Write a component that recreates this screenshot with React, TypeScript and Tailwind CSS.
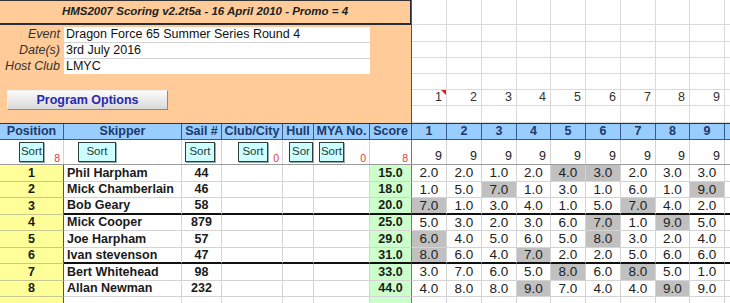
import React from "react";

const raceW = [
  "w-[35px]",
  "w-[35px]",
  "w-[35px]",
  "w-[34px]",
  "w-[35px]",
  "w-[35px]",
  "w-[35px]",
  "w-[34px]",
  "w-[35px]",
];

const rows = [
  { pos: 1, name: "Phil Harpham", sail: "44", score: "15.0", r: ["2.0", "2.0", "1.0", "2.0", "4.0", "3.0", "2.0", "3.0", "3.0"], g: [4, 5] },
  { pos: 2, name: "Mick Chamberlain", sail: "46", score: "18.0", r: ["1.0", "5.0", "7.0", "1.0", "3.0", "1.0", "6.0", "1.0", "9.0"], g: [2, 8] },
  { pos: 3, name: "Bob Geary", sail: "58", score: "20.0", r: ["7.0", "1.0", "3.0", "4.0", "1.0", "5.0", "7.0", "4.0", "2.0"], g: [0, 6] },
  { pos: 4, name: "Mick Cooper", sail: "879", score: "25.0", r: ["5.0", "3.0", "2.0", "3.0", "6.0", "7.0", "1.0", "9.0", "5.0"], g: [5, 7] },
  { pos: 5, name: "Joe Harpham", sail: "57", score: "29.0", r: ["6.0", "4.0", "5.0", "6.0", "5.0", "8.0", "3.0", "2.0", "4.0"], g: [0, 5] },
  { pos: 6, name: "Ivan stevenson", sail: "47", score: "31.0", r: ["8.0", "6.0", "4.0", "7.0", "2.0", "2.0", "5.0", "6.0", "6.0"], g: [0, 3] },
  { pos: 7, name: "Bert Whitehead", sail: "98", score: "33.0", r: ["3.0", "7.0", "6.0", "5.0", "8.0", "6.0", "8.0", "5.0", "1.0"], g: [4, 6] },
  { pos: 8, name: "Allan Newman", sail: "232", score: "44.0", r: ["4.0", "8.0", "8.0", "9.0", "7.0", "4.0", "4.0", "9.0", "9.0"], g: [3, 7] },
];

const topRowH = ["h-[25px]", "h-[17px]", "h-[16px]", "h-[16px]", "h-[16px]", "h-[16px]", "h-[17px]"];

function SortBtn({ w, label = "Sort" }: { w: string; label?: string }) {
  return (
    <div
      className={`${w} h-[20px] border border-[#2c3e3e] bg-[#ccffff] flex items-center justify-center overflow-hidden text-[11.5px] leading-none text-[#2a3a36] shadow-[1px_1px_0_#9aa]`}
    >
      {label}
    </div>
  );
}

function Red({ children }: { children: React.ReactNode }) {
  return (
    <span className="absolute right-[3px] bottom-[1px] text-[10.5px] leading-none text-[#e03a3a]">
      {children}
    </span>
  );
}

export default function App() {
  return (
    <div className="w-[730px] h-[303px] overflow-hidden bg-white font-['Liberation_Sans',Arial,sans-serif] text-[#1a1a1a]">
      {/* Top section */}
      <div className="flex h-[123px]">
        <div className="w-[412px] h-[123px] bg-[#ffcc99] border-r border-r-[#555] flex flex-col">
          <div className="h-[25px] border-t border-t-[#333] border-b-2 border-b-[#2a2d3a] border-r border-r-[#2a2d3a] flex items-center justify-center text-[11.5px] font-bold italic text-[#222]">
            HMS2007 Scoring v2.2t5a - 16 April 2010 - Promo = 4
          </div>
          <div className="mt-[2px] flex flex-col">
            {[
              ["Event", "Dragon Force 65 Summer Series Round 4", "h-[15px]", ""],
              ["Date(s)", "3rd July 2016", "h-[16px]", "border-t border-t-[#d4d4d4]"],
              ["Host Club", "LMYC", "h-[16px]", "border-t border-t-[#d4d4d4]"],
            ].map(([l, v, h, b]) => (
              <div key={l} className={`flex ${h}`}>
                <div className="w-[64px] flex items-center justify-end pr-[4px] italic text-[12.5px] text-[#333] leading-none">
                  {l}
                </div>
                <div className={`w-[306px] bg-white flex items-center pl-[2px] text-[12.5px] leading-none text-[#111] ${b}`}>
                  {v}
                </div>
              </div>
            ))}
          </div>
          <div className="mt-[16px] ml-[7px] w-[161px] h-[20px] bg-gradient-to-b from-[#fbfbfb] to-[#d9d9d9] border border-t-[#f0f0f0] border-l-[#f0f0f0] border-r-[#8a8a8a] border-b-[#8a8a8a] flex items-center justify-center text-[12.5px] font-bold text-[#2727b0] leading-none">
            Program Options
          </div>
        </div>
        <div className="flex-1 flex flex-col">
          {topRowH.map((h, ri) => (
            <div key={ri} className={`flex ${h}`}>
              {raceW.map((w, ci) => (
                <div
                  key={ci}
                  className={`${w} relative border-r border-b border-[#dadada] flex items-center justify-end pr-[4px] text-[12.5px] text-[#333] leading-none`}
                >
                  {ri === 5 ? ci + 1 : null}
                  {ri === 5 && ci === 0 ? (
                    <span className="absolute top-0 right-0 w-0 h-0 border-l-[5px] border-l-transparent border-t-[5px] border-t-[#e02020]" />
                  ) : null}
                </div>
              ))}
              <div className="w-[5px] border-b border-[#dadada]" />
            </div>
          ))}
        </div>
      </div>

      {/* Header row */}
      <div className="flex h-[17px] bg-[#99ccff] border-t border-t-[#333] border-b border-b-[#3a5a8c] text-[12.5px] font-bold text-[#1c3a6a] leading-none">
        {[
          ["Position", "w-[64px]"],
          ["Skipper", "w-[118px]"],
          ["Sail #", "w-[40px]"],
          ["Club/City", "w-[61px]"],
          ["Hull", "w-[31px]"],
          ["MYA No.", "w-[56px]"],
          ["Score", "w-[42px]"],
        ].map(([t, w]) => (
          <div key={t} className={`${w} border-r border-r-[#3a5a8c] flex items-center justify-center whitespace-nowrap overflow-hidden`}>
            {t}
          </div>
        ))}
        {raceW.map((w, i) => (
          <div key={i} className={`${w} border-r border-r-[#3a5a8c] flex items-center justify-center`}>
            {i + 1}
          </div>
        ))}
        <div className="w-[5px]" />
      </div>

      {/* Sort row */}
      <div className="flex h-[25px] border-b border-b-[#9a9a9a]">
        <div className="w-[64px] relative border-r border-r-[#d4d4d4] flex justify-center pt-[2px]">
          <SortBtn w="w-[25px]" />
          <Red>8</Red>
        </div>
        <div className="w-[118px] border-r border-r-[#d4d4d4] flex pt-[2px] pl-[14px]">
          <SortBtn w="w-[38px]" />
        </div>
        <div className="w-[40px] border-r border-r-[#d4d4d4] flex pt-[2px] pl-[3px]">
          <SortBtn w="w-[30px]" />
        </div>
        <div className="w-[61px] relative border-r border-r-[#d4d4d4] flex pt-[2px] pl-[16px]">
          <SortBtn w="w-[30px]" />
          <Red>0</Red>
        </div>
        <div className="w-[31px] border-r border-r-[#d4d4d4] flex pt-[2px] pl-[6px]">
          <SortBtn w="w-[24px]" label="Sor" />
        </div>
        <div className="w-[56px] relative border-r border-r-[#d4d4d4] flex pt-[2px] pl-[5px]">
          <SortBtn w="w-[25px]" />
          <Red>0</Red>
        </div>
        <div className="w-[42px] relative border-r border-r-[#777]">
          <Red>8</Red>
        </div>
        {raceW.map((w, i) => (
          <div key={i} className={`${w} border-r border-r-[#d4d4d4] flex items-end justify-end pr-[4px] pb-[2px] text-[12.5px] leading-none text-[#222]`}>
            9
          </div>
        ))}
        <div className="w-[5px]" />
      </div>

      {/* Data rows */}
      {rows.map((row, idx) => {
        const thick = idx === 2 || idx === 5;
        const b = thick ? "border-b-2 border-b-[#111]" : "border-b border-b-[#d4d4d4]";
        return (
          <div key={row.pos} className="flex h-[16.5px] text-[12.5px] leading-none">
            <div className="w-[64px] bg-[#ffff99] border-r border-r-[#555] border-b border-b-[#c8c88c] flex items-center justify-center font-bold">
              {row.pos}
            </div>
            <div className={`w-[118px] border-r border-r-[#d4d4d4] ${b} flex items-center pl-[3px] font-bold whitespace-nowrap`}>
              {row.name}
            </div>
            <div className={`w-[40px] border-r border-r-[#d4d4d4] ${b} flex items-center justify-center font-bold`}>
              {row.sail}
            </div>
            <div className={`w-[61px] border-r border-r-[#d4d4d4] ${b}`} />
            <div className={`w-[31px] border-r border-r-[#d4d4d4] ${b}`} />
            <div className={`w-[56px] border-r border-r-[#d4d4d4] ${b}`} />
            <div className={`w-[42px] bg-[#ccffcc] border-r border-r-[#777] ${b} flex items-center justify-center font-bold`}>
              {row.score}
            </div>
            {raceW.map((w, i) => (
              <div
                key={i}
                className={`${w} ${row.g.includes(i) ? "bg-[#c0c0c0]" : ""} border-r border-r-[#d4d4d4] ${b} flex items-center justify-center text-[13.5px] text-[#222]`}
              >
                {row.r[i]}
              </div>
            ))}
            <div className={`w-[5px] ${b}`} />
          </div>
        );
      })}

      {/* Trailing row */}
      <div className="flex h-[16px]">
        <div className="w-[64px] bg-[#ffff99] border-r border-r-[#555]" />
        <div className="w-[118px] border-r border-r-[#d4d4d4]" />
        <div className="w-[40px] border-r border-r-[#d4d4d4]" />
        <div className="w-[61px] border-r border-r-[#d4d4d4]" />
        <div className="w-[31px] border-r border-r-[#d4d4d4]" />
        <div className="w-[56px] border-r border-r-[#d4d4d4]" />
        <div className="w-[42px] bg-[#ccffcc] border-r border-r-[#777]" />
        {raceW.map((w, i) => (
          <div key={i} className={`${w} border-r border-r-[#d4d4d4]`} />
        ))}
      </div>
    </div>
  );
}
